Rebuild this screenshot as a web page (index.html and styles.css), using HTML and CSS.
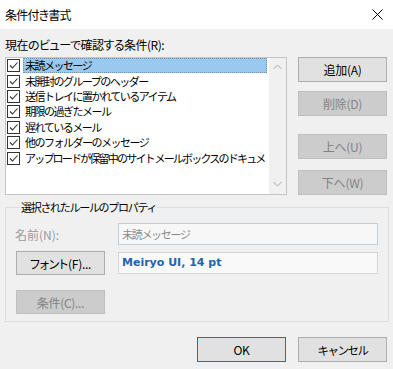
FILE: index.html
```html
<!DOCTYPE html>
<html lang="ja">
<head>
    <meta charset="UTF-8">
    <meta name="viewport" content="width=device-width, initial-scale=1.0">
    <title>条件付き書式</title>
    <link rel="stylesheet" href="styles.css">
</head>
<body>
    <div class="dialog">
        <!-- Title bar -->
        <div class="titlebar">
            <span class="title">条件付き書式</span>
            <svg class="close" width="11" height="11" viewBox="0 0 11 11">
                <path d="M0.5 0.5 L10.5 10.5 M10.5 0.5 L0.5 10.5" stroke="#000" stroke-width="1" fill="none"/>
            </svg>
        </div>

        <div class="content">
            <div class="label">現在のビューで確認する条件(R):</div>

            <!-- Rule list and side buttons -->
            <div class="rules">
                <div class="listbox">
                    <ul class="items">
                        <li class="item selected"><span class="check"></span><span class="text">未読メッセージ</span></li>
                        <li class="item"><span class="check"></span><span class="text">未開封のグループのヘッダー</span></li>
                        <li class="item"><span class="check"></span><span class="text">送信トレイに置かれているアイテム</span></li>
                        <li class="item"><span class="check"></span><span class="text">期限の過ぎたメール</span></li>
                        <li class="item"><span class="check"></span><span class="text">遅れているメール</span></li>
                        <li class="item"><span class="check"></span><span class="text">他のフォルダーのメッセージ</span></li>
                        <li class="item"><span class="check"></span><span class="text long">アップロードが保留中のサイト メールボックスのドキュメ</span></li>
                    </ul>
                    <div class="scrollbar">
                        <svg width="9" height="6" viewBox="0 0 9 6"><path d="M0.5 5 L4.5 1 L8.5 5" stroke="#a6a6a6" fill="none"/></svg>
                        <svg width="9" height="6" viewBox="0 0 9 6"><path d="M0.5 1 L4.5 5 L8.5 1" stroke="#a6a6a6" fill="none"/></svg>
                    </div>
                </div>
                <div class="side-buttons">
                    <button class="btn">追加(A)</button>
                    <button class="btn disabled">削除(D)</button>
                    <button class="btn disabled move-up">上へ(U)</button>
                    <button class="btn disabled move-down">下へ(W)</button>
                </div>
            </div>

            <!-- Properties of the selected rule -->
            <fieldset class="props">
                <legend>選択されたルールのプロパティ</legend>
                <div class="prop-row">
                    <span class="prop-label">名前(N):</span>
                    <div class="field name-field">未読メッセージ</div>
                </div>
                <div class="prop-row font-row">
                    <button class="btn">フォント(F)...</button>
                    <div class="field font-field">Meiryo UI, 14 pt</div>
                </div>
                <div class="prop-row cond-row">
                    <button class="btn disabled">条件(C)...</button>
                </div>
            </fieldset>

            <!-- Dialog buttons -->
            <div class="footer">
                <button class="btn default">OK</button>
                <button class="btn kana">キャンセル</button>
            </div>
        </div>
    </div>
</body>
</html>
```

FILE: styles.css
```css
body {
    margin: 0;
    padding: 0;
    background-color: #f0f0f0;
    font-family: "Noto Sans CJK JP", "Noto Sans", sans-serif;
    font-size: 12px;
    font-feature-settings: "palt";
    color: #000;
}
.dialog {
    width: 393px;
    height: 369px;
    overflow: hidden;
}
.titlebar {
    height: 29px;
    background-color: #fff;
    display: flex;
    align-items: center;
    justify-content: space-between;
    padding: 0 10px 0 5px;
}
.title {
    font-size: 12px;
    line-height: 29px;
    letter-spacing: -0.8px;
}
.close {
    display: block;
    margin-bottom: 1px;
}
.content {
    padding: 0 6px 0 5px;
}
.label {
    margin-top: 8px;
    line-height: 16px;
    height: 16px;
    letter-spacing: -0.5px;
}
.rules {
    display: flex;
    margin-top: 4px;
}
.listbox {
    width: 282px;
    height: 138px;
    box-sizing: border-box;
    border: 1px solid #c4c4c4;
    background-color: #fff;
    display: flex;
}
.items {
    list-style: none;
    margin: 0;
    padding: 0 0 0 1px;
    width: 262px;
    flex-shrink: 0;
    overflow: hidden;
}
.item {
    display: flex;
    align-items: center;
    height: 15.4px;
}
.check {
    width: 13px;
    height: 13px;
    box-sizing: border-box;
    border: 1px solid #333;
    flex-shrink: 0;
    background: #fff url("data:image/svg+xml;utf8,<svg xmlns='http://www.w3.org/2000/svg' width='11' height='11'><path d='M2 5.5 L4.5 8 L9.5 2.5' stroke='%23333' stroke-width='1.1' fill='none'/></svg>") no-repeat center;
}
.text {
    flex: 0 0 244px;
    min-width: 0;
    margin-left: 3px;
    padding-left: 1px;
    height: 15px;
    line-height: 13px;
    font-size: 11px;
    font-feature-settings: normal;
    letter-spacing: -1.5px;
    white-space: nowrap;
    overflow: hidden;
    box-sizing: border-box;
    border: 1px solid transparent;
}
.text.long {
    letter-spacing: -1.8px;
}
.selected .text {
    background-color: #99c9ef;
    border: 1px dotted #6f8fae;
}
.scrollbar {
    width: 17px;
    background-color: #f0f0f0;
    display: flex;
    flex-direction: column;
    justify-content: space-between;
    align-items: center;
    padding: 6px 0 7px;
    box-sizing: border-box;
    margin-left: auto;
}
.scrollbar svg {
    display: block;
}
.side-buttons {
    display: flex;
    flex-direction: column;
    margin-left: 11px;
}
.btn {
    width: 89px;
    height: 25px;
    box-sizing: border-box;
    background-color: #e1e1e1;
    border: 1px solid #adadad;
    font-family: "Noto Sans CJK JP", "Noto Sans", sans-serif;
    font-size: 12px;
    font-feature-settings: "palt";
    letter-spacing: -0.3px;
    color: #000;
    padding: 0;
    margin: 0;
}
.btn.kana {
    font-size: 11.5px;
    font-feature-settings: normal;
    letter-spacing: -1.5px;
}
.btn.disabled {
    background-color: #cccccc;
    border-color: #bfbfbf;
    color: #838383;
}
.btn.default {
    border-color: #0078d7;
}
.side-buttons .btn + .btn {
    margin-top: 9px;
}
.side-buttons .move-up {
    margin-top: 18px !important;
}
.side-buttons .move-down {
    margin-top: 11px !important;
}
.props {
    margin: 5px -2px 0 0;
    padding: 9px 10px 7px 9px;
    border: 1px solid #dcdcdc;
    min-width: 0;
}
.props legend {
    padding: 0 1px;
    margin-left: 5px;
    line-height: 14px;
    font-size: 11px;
    font-feature-settings: normal;
    letter-spacing: -1.3px;
}
.prop-row {
    display: flex;
    align-items: center;
}
.prop-label {
    width: 102px;
    color: #9a9a9a;
}
.field {
    width: 260px;
    height: 22px;
    box-sizing: border-box;
    padding-left: 3px;
    line-height: 20px;
    margin-left: auto;
}
.name-field {
    border: 1px solid #c3cdd8;
    background-color: #f7f7f7;
    color: #8a8a8a;
    font-size: 11px;
    font-feature-settings: normal;
    letter-spacing: -1.3px;
}
.font-row {
    margin-top: 6px;
}
.font-row .btn {
    margin-left: 1px;
    height: 24px;
}
.font-field {
    border: 1px solid #d4d4d4;
    background-color: #f9f9f9;
    font-family: "DejaVu Sans", sans-serif;
    font-weight: bold;
    font-size: 11px;
    color: #1f64ad;
}
.cond-row {
    margin-top: 15px;
}
.cond-row .btn {
    margin-left: 1px;
    height: 24px;
}
.footer {
    display: flex;
    justify-content: flex-end;
    gap: 12px;
    margin-top: 15px;
}
```
